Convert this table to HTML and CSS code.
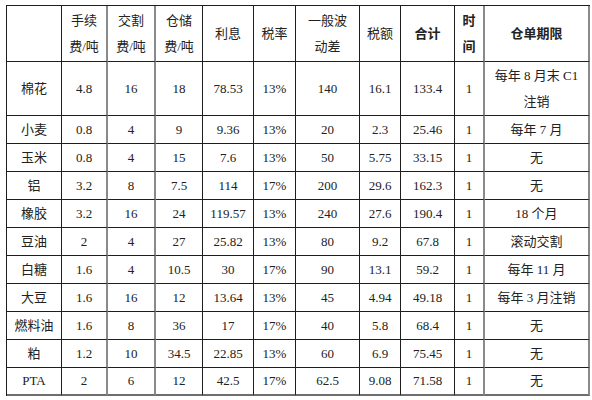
FILE: index.html
```html
<!DOCTYPE html>
<html lang="zh">
<head>
<meta charset="utf-8">
<title>期货交割成本</title>
<link rel="stylesheet" href="styles.css">
</head>
<body>
<table class="sheet">
  <thead>
    <tr class="head">
      <th class="w1"></th>
      <th class="w2 gray">手续<br>费/吨</th>
      <th class="w3 gray">交割<br>费/吨</th>
      <th class="w4">仓储<br>费/吨</th>
      <th class="w5">利息</th>
      <th class="w6">税率</th>
      <th class="w7">一般波<br>动差</th>
      <th class="w8">税额</th>
      <th class="w9 bold">合计</th>
      <th class="w10 gray bold">时<br>间</th>
      <th class="w11 gray bold">仓单期限</th>
    </tr>
  </thead>
  <tbody>
    <tr class="tall">
      <td>棉花</td><td class="gray">4.8</td><td class="gray">16</td><td>18</td><td>78.53</td><td>13%</td><td>140</td><td>16.1</td><td>133.4</td><td class="gray">1</td><td class="gray">每年 8 月末 C1<br>注销</td>
    </tr>
    <tr>
      <td>小麦</td><td class="gray">0.8</td><td class="gray">4</td><td>9</td><td>9.36</td><td>13%</td><td>20</td><td>2.3</td><td>25.46</td><td class="gray">1</td><td class="gray">每年 7 月</td>
    </tr>
    <tr>
      <td>玉米</td><td class="gray">0.8</td><td class="gray">4</td><td>15</td><td>7.6</td><td>13%</td><td>50</td><td>5.75</td><td>33.15</td><td class="gray">1</td><td class="gray">无</td>
    </tr>
    <tr>
      <td>铝</td><td class="gray">3.2</td><td class="gray">8</td><td>7.5</td><td>114</td><td>17%</td><td>200</td><td>29.6</td><td>162.3</td><td class="gray">1</td><td class="gray">无</td>
    </tr>
    <tr>
      <td>橡胶</td><td class="gray">3.2</td><td class="gray">16</td><td>24</td><td>119.57</td><td>13%</td><td>240</td><td>27.6</td><td>190.4</td><td class="gray">1</td><td class="gray">18 个月</td>
    </tr>
    <tr>
      <td>豆油</td><td class="gray">2</td><td class="gray">4</td><td>27</td><td>25.82</td><td>13%</td><td>80</td><td>9.2</td><td>67.8</td><td class="gray">1</td><td class="gray">滚动交割</td>
    </tr>
    <tr>
      <td>白糖</td><td class="gray">1.6</td><td class="gray">4</td><td>10.5</td><td>30</td><td>17%</td><td>90</td><td>13.1</td><td>59.2</td><td class="gray">1</td><td class="gray">每年 11 月</td>
    </tr>
    <tr>
      <td>大豆</td><td class="gray">1.6</td><td class="gray">16</td><td>12</td><td>13.64</td><td>13%</td><td>45</td><td>4.94</td><td>49.18</td><td class="gray">1</td><td class="gray">每年 3 月注销</td>
    </tr>
    <tr>
      <td>燃料油</td><td class="gray">1.6</td><td class="gray">8</td><td>36</td><td>17</td><td>17%</td><td>40</td><td>5.8</td><td>68.4</td><td class="gray">1</td><td class="gray">无</td>
    </tr>
    <tr>
      <td>粕</td><td class="gray">1.2</td><td class="gray">10</td><td>34.5</td><td>22.85</td><td>13%</td><td>60</td><td>6.9</td><td>75.45</td><td class="gray">1</td><td class="gray">无</td>
    </tr>
    <tr class="last">
      <td>PTA</td><td class="gray">2</td><td class="gray">6</td><td>12</td><td>42.5</td><td>17%</td><td>62.5</td><td>9.08</td><td>71.58</td><td class="gray">1</td><td class="gray">无</td>
    </tr>
  </tbody>
</table>
</body>
</html>
```

FILE: styles.css
```css
html, body {
  margin: 0;
  padding: 0;
  background: #ffffff;
}

body {
  padding: 5px 0 0 6px;
  font-family: "Liberation Serif", "Noto Sans CJK SC", serif;
  font-size: 13px;
  color: #222222;
}

.sheet {
  border-collapse: separate;
  border-spacing: 0;
  table-layout: fixed;
  width: 584px;
  border-top: 1px solid #1e1e1e;
  border-left: 1px solid #1e1e1e;
}

.sheet th,
.sheet td {
  box-sizing: border-box;
  padding: 0;
  text-align: center;
  vertical-align: middle;
  font-weight: normal;
  line-height: 26px;
  white-space: nowrap;
  overflow: hidden;
  border-right: 1px solid #1e1e1e;
  border-bottom: 1px solid #1e1e1e;
  height: 28px;
}

.sheet .gray {
  border-right: 2px solid #8a8a8a;
}

.sheet .bold {
  font-weight: bold;
}

.head th {
  height: 56px;
}

.tall td {
  height: 54px;
}

.last td {
  border-bottom: 2px solid #6e6e6e;
}

.w1 { width: 55px; }
.w2 { width: 46px; }
.w3 { width: 48px; }
.w4 { width: 47px; }
.w5 { width: 51px; }
.w6 { width: 42px; }
.w7 { width: 64px; }
.w8 { width: 41px; }
.w9 { width: 54px; }
.w10 { width: 30px; }
.w11 { width: 105px; }
```
